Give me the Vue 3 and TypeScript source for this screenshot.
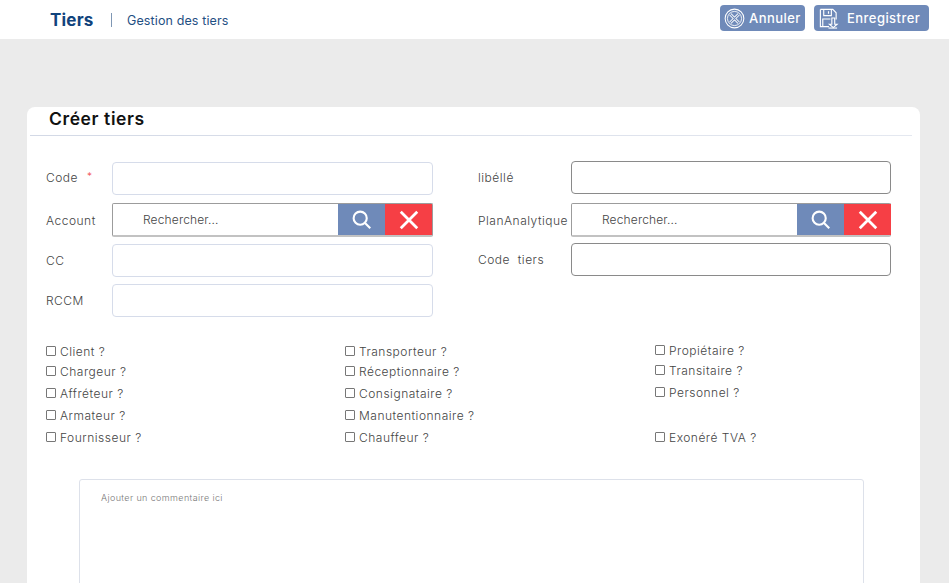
<template>
  <div class="page">
    <header class="topbar">
      <div class="brand">
        <span class="brand-title">Tiers</span>
        <span class="brand-sep"></span>
        <span class="brand-sub">Gestion des tiers</span>
      </div>
      <div class="actions">
        <button class="action action-cancel" type="button">
          <svg class="action-icon" viewBox="0 0 22 22" fill="none" stroke="#fff">
            <circle cx="11" cy="11" r="9.8" stroke-width="1.1" />
            <circle cx="11" cy="11" r="7.4" stroke-width="0.9" />
            <path d="M6.6 6.6l8.8 8.8M15.4 6.6l-8.8 8.8" stroke-width="3" />
            <path d="M6.4 6.4l9.2 9.2M15.6 6.4l-9.2 9.2" stroke="#6f8ab9" stroke-width="1.2" />
          </svg>
          Annuler
        </button>
        <button class="action action-save" type="button">
          <svg class="action-icon" viewBox="0 0 22 22" fill="none" stroke="#fff" stroke-width="1.2">
            <path d="M2.5 1.5h13l3.5 3.5v7M2.5 1.5v18h9" />
            <path d="M6 1.5v6.5h8V1.5M11 3.5v2.5" />
            <path d="M5 19.5v-8h8" />
            <path d="M14.5 10.5v6.5h-2.5l4 3.5 4-3.5h-2.5v-6.5z" />
            <path d="M11 21h9" />
          </svg>
          Enregistrer
        </button>
      </div>
    </header>

    <main class="content">
      <section class="card">
        <h1 class="card-title">Créer tiers</h1>
        <div class="card-line"></div>

        <div class="form">
          <div class="col">
            <div class="row row-code">
              <label>Code <span class="req">*</span></label>
              <div class="box"></div>
            </div>
            <div class="row row-search">
              <label>Account</label>
              <div class="search">
                <span class="search-text">Rechercher...</span>
                <span class="btn-find">
                  <svg viewBox="0 0 24 24" fill="none" stroke="#fff" stroke-width="2.4">
                    <circle cx="10.5" cy="10.5" r="7.5" /><path d="M16 16l6 6" />
                  </svg>
                </span>
                <span class="btn-clear">
                  <svg viewBox="0 0 24 24" fill="none" stroke="#fff" stroke-width="3">
                    <path d="M3 3l18 18M21 3L3 21" />
                  </svg>
                </span>
              </div>
            </div>
            <div class="row row-cc">
              <label>CC</label>
              <div class="box"></div>
            </div>
            <div class="row row-rccm">
              <label>RCCM</label>
              <div class="box"></div>
            </div>
          </div>

          <div class="col">
            <div class="row row-lib">
              <label>libéllé</label>
              <div class="box box-dark"></div>
            </div>
            <div class="row row-search">
              <label>PlanAnalytique</label>
              <div class="search">
                <span class="search-text">Rechercher...</span>
                <span class="btn-find">
                  <svg viewBox="0 0 24 24" fill="none" stroke="#fff" stroke-width="2.4">
                    <circle cx="10.5" cy="10.5" r="7.5" /><path d="M16 16l6 6" />
                  </svg>
                </span>
                <span class="btn-clear">
                  <svg viewBox="0 0 24 24" fill="none" stroke="#fff" stroke-width="3">
                    <path d="M3 3l18 18M21 3L3 21" />
                  </svg>
                </span>
              </div>
            </div>
            <div class="row row-tiers">
              <label>Code&nbsp; tiers</label>
              <div class="box box-dark"></div>
            </div>
          </div>
        </div>

        <div class="checks">
          <div v-for="(col, i) in checkCols" :key="i" class="check-col" :class="`check-col-${i + 1}`">
            <div v-for="(item, j) in col" :key="j" class="check">
              <template v-if="item">
                <span class="tick"></span>
                <span>{{ item }}</span>
              </template>
            </div>
          </div>
        </div>

        <div class="comment">Ajouter un commentaire ici</div>
      </section>
    </main>
  </div>
</template>

<script setup lang="ts">
const checkCols: string[][] = [
  ['Client ?', 'Chargeur ?', 'Affréteur ?', 'Armateur ?', 'Fournisseur ?'],
  ['Transporteur ?', 'Réceptionnaire ?', 'Consignataire ?', 'Manutentionnaire ?', 'Chauffeur ?'],
  ['Propiétaire ?', 'Transitaire ?', 'Personnel ?', '', 'Exonéré TVA ?']
]
</script>

<style>
html,
body {
  margin: 0;
  overflow: hidden;
}
</style>

<style scoped>
.page {
  width: 949px;
  height: 583px;
  overflow: hidden;
  background: #ebebeb;
  font-family: "Inter", "Open Sans", sans-serif;
  color: #555;
}

.topbar {
  height: 39px;
  background: #fff;
  display: flex;
  justify-content: space-between;
  padding: 5px 20px 0 50px;
  box-sizing: border-box;
}

.brand {
  display: flex;
  align-items: center;
  height: 30px;
}

.brand-title {
  font-size: 17px;
  font-weight: 700;
  letter-spacing: 0.2px;
  color: #10437c;
  width: 61px;
}

.brand-sep {
  width: 1px;
  height: 14px;
  background: #7f97b4;
  margin-right: 15px;
}

.brand-sub {
  font-size: 12.5px;
  letter-spacing: 0.12px;
  color: #1f5083;
}

.actions {
  display: flex;
  gap: 9px;
}

.action {
  height: 26px;
  border: 0;
  border-radius: 4px;
  background: #6f8ab9;
  color: #fff;
  font-family: inherit;
  font-size: 13px;
  font-weight: 500;
  letter-spacing: 0.45px;
  display: flex;
  align-items: center;
  padding: 0 0 0 4px;
  gap: 4px;
}

.action-cancel {
  width: 85px;
}

.action-save {
  width: 115px;
  gap: 8px;
}

.action-icon {
  width: 21px;
  height: 21px;
  flex: none;
}

.content {
  padding: 68px 29px 0 27px;
}

.card {
  background: #fff;
  border-radius: 8px 8px 0 0;
  height: 476px;
  padding-top: 2px;
  box-sizing: border-box;
}

.card-title {
  margin: 0 0 0 22px;
  height: 21px;
  line-height: 20px;
  font-size: 17.5px;
  font-weight: 600;
  letter-spacing: 0.6px;
  color: #111;
}

.card-line {
  height: 1px;
  margin: 5px 8px 0 3px;
  background: linear-gradient(90deg, #d3d9e6, #e4e8f0);
}

.form {
  display: flex;
  padding: 25px 0 0 19px;
}

.col {
  display: flex;
  flex-direction: column;
}

.col + .col {
  margin-left: 45px;
}

.row {
  display: flex;
  align-items: center;
  font-size: 12px;
  font-weight: 300;
  letter-spacing: 0.5px;
  color: #444;
}

.col:first-child .row label {
  width: 66px;
}

.col:last-child .row label {
  width: 93px;
}

.row-code label {
  position: relative;
  top: -1px;
}

.req {
  color: #f14b4b;
  font-size: 10px;
  margin-left: 5px;
  position: relative;
  top: -2px;
}

.box {
  box-sizing: border-box;
  width: 321px;
  height: 33px;
  border: 1px solid #d6dcea;
  border-radius: 4px;
  background: #fff;
}

.box-dark {
  width: 320px;
  height: 33px;
  border-color: #8a8a8a;
  border-bottom-width: 1.5px;
}

.row-code { margin-top: 1px; }
.row-lib { margin-top: 0; }
.row-search { margin-top: 8px; }
.row-cc { margin-top: 7px; }
.row-rccm { margin-top: 7px; }
.col:last-child .row-search { margin-top: 9px; }
.row-tiers { margin-top: 6px; }

.search {
  box-sizing: border-box;
  width: 321px;
  height: 34px;
  border: 1px solid #9c9c9c;
  border-bottom: 2px solid #c2c2c2;
  border-radius: 2px;
  display: flex;
  align-items: stretch;
}

.col:last-child .search {
  width: 320px;
}

.col:last-child .btn-clear {
  margin-right: -1px;
}

.search-text {
  flex: 1;
  padding-left: 30px;
  line-height: 31px;
  letter-spacing: 0.15px;
}

.btn-find,
.btn-clear {
  width: 47px;
  display: flex;
  align-items: center;
  justify-content: center;
}

.btn-find {
  background: #6f8ab9;
}

.btn-clear {
  background: #f63f45;
}

.btn-find svg {
  width: 21px;
  height: 21px;
}

.btn-clear svg {
  width: 22px;
  height: 22px;
}

.checks {
  display: flex;
  padding: 27px 0 0 19px;
  font-size: 12px;
  font-weight: 300;
  letter-spacing: 0.5px;
  line-height: 15px;
  color: #444;
}

.check-col {
  display: flex;
  flex-direction: column;
}

.check-col-1 {
  width: 299px;
}

.check-col-2 {
  width: 310px;
}

.check-col-3 {
  margin-top: -1px;
}

.check {
  height: 22px;
  display: flex;
  align-items: flex-start;
  gap: 4px;
}

.check:first-child {
  height: 20px;
}

.check-col-3 .check:last-child {
  margin-top: 1px;
}

.tick {
  box-sizing: border-box;
  width: 10px;
  height: 10px;
  margin-top: 2px;
  border: 1px solid #777;
  border-radius: 1px;
  flex: none;
}

.comment {
  box-sizing: border-box;
  margin: 27px 56px 0 52px;
  height: 120px;
  border: 1px solid #dde1ea;
  border-radius: 3px;
  padding: 12px 21px;
  font-size: 9px;
  font-weight: 300;
  letter-spacing: 0.38px;
  color: #777;
}
</style>
